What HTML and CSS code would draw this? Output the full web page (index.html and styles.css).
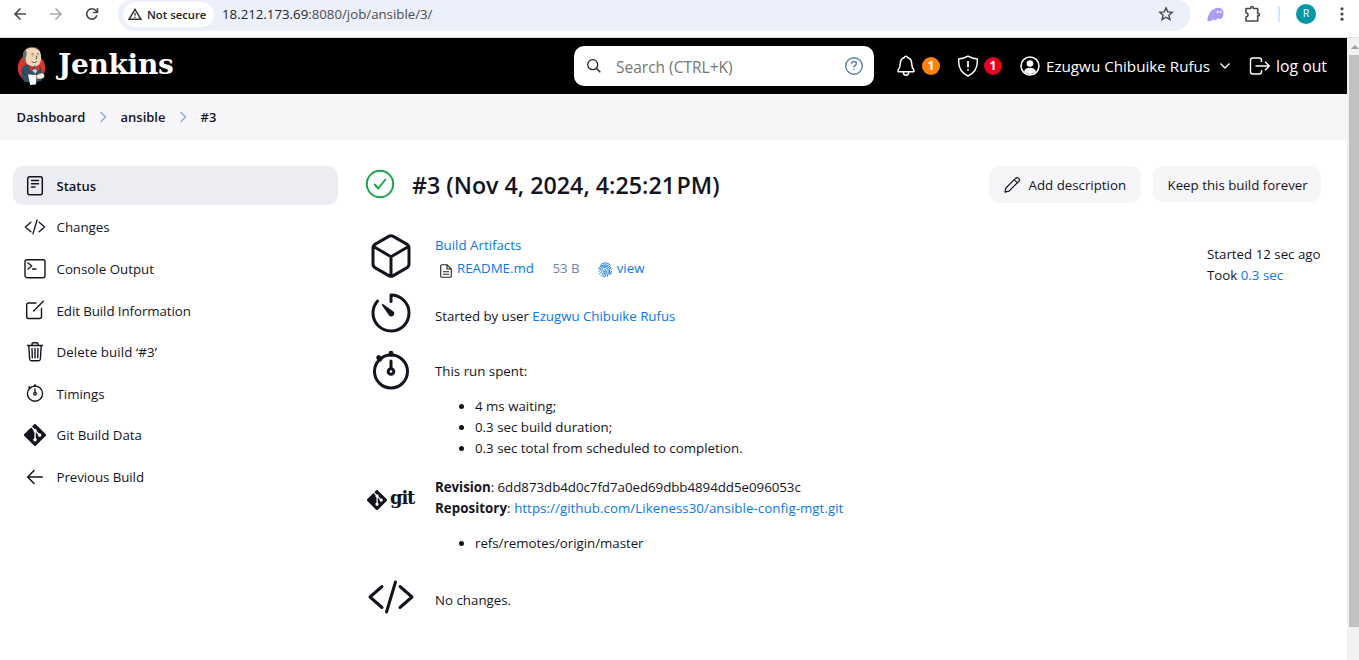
FILE: index.html
```html
<!DOCTYPE html>
<html lang="en">
<head>
<meta charset="utf-8">
<title>#3 - ansible - Jenkins</title>
<link rel="stylesheet" href="styles.css">
</head>
<body>
<svg class="defs" width="0" height="0">
  <symbol id="code" viewBox="0 0 512 512"><path d="M160 368L32 256l128-112M352 368l128-112-128-112M304 96l-96 320" fill="none" stroke="currentColor" stroke-linecap="round" stroke-linejoin="round" stroke-width="32"/></symbol>
  <symbol id="timer" viewBox="0 0 512 512"><circle cx="256" cy="272" r="176" fill="none" stroke="currentColor" stroke-width="32"/><path d="M256 160v72" fill="none" stroke="currentColor" stroke-linecap="round" stroke-width="32"/><circle cx="256" cy="272" r="30" fill="none" stroke="currentColor" stroke-width="32"/><path d="M256 76v12M124 124l14 14" stroke="currentColor" stroke-width="52" stroke-linecap="round"/></symbol>
  <symbol id="git" viewBox="0 0 92 92"><path d="M90.2 41.9 50.1 1.8a5.9 5.9 0 0 0-8.4 0l-8.3 8.4 10.500 10.500a7 7 0 0 1 8.900 9l10.200 10.100a7 7 0 1 1-4.200 4l-9.500-9.500v25a7 7 0 1 1-5.800-.2V33.900a7 7 0 0 1-3.800-9.200L29.400 14.300 1.700 41.900a5.900 5.900 0 0 0 0 8.400l40.100 40.100a5.900 5.900 0 0 0 8.400 0l40-40.100a5.900 5.900 0 0 0 0-8.400z" fill="currentColor"/></symbol>
</svg>

<div class="chrome">
  <svg class="ic" width="14" height="14" viewBox="0 0 14 14"><path d="M7.500 1.500 2 7l5.500 5.500M2 7h11" fill="none" stroke="#45484c" stroke-width="1.600"/></svg>
  <svg class="ic forward" width="14" height="14" viewBox="0 0 14 14"><path d="M6.500 1.500 12 7l-5.500 5.500M12 7H1" fill="none" stroke="#a6a8ab" stroke-width="1.600"/></svg>
  <svg class="ic reload" width="14" height="14" viewBox="0 0 14 14"><path d="M11.900 8.300A5.200 5.200 0 1 1 10.900 3.600L12 5" fill="none" stroke="#45484c" stroke-width="1.600"/><path d="M12.500 1v4.500H8" fill="none" stroke="#45484c" stroke-width="1.600"/></svg>
  <div class="omnibox">
    <div class="chip">
      <svg width="14" height="12" viewBox="0 0 14 12"><path d="M7 1.300 13 11.300H1z" fill="none" stroke="#333" stroke-width="1.400"/><path d="M7 4.800v3M7 8.700v1.300" stroke="#333" stroke-width="1.300"/></svg>
      <span class="not-secure">Not secure</span>
    </div>
    <span class="url"><b>18.212.173.69</b>:8080/job/ansible/3/</span>
    <svg class="star" width="16" height="16" viewBox="0 0 16 16"><path d="m8 1.900 1.800 4 4.400.4-3.300 2.900 1 4.300L8 11.200l-3.900 2.300 1-4.300L1.800 6.300l4.400-.4z" fill="none" stroke="#45484c" stroke-width="1.400"/></svg>
  </div>
  <svg class="ghost" width="17" height="15" viewBox="0 0 17 15"><path d="M.3 13.500C1 6 5.500.8 11.500.8c3.500 0 5 2.400 5 4.800 0 4-1.500 6.700-3.500 6.700-1 0-1-1-1.800-1-1 0-1.500 2-3.200 2-1 0-1.200-.8-1.800-.8-1 0-2 1.800-3.700 1.800-1.300 0-2.300-.2-2.200-.8z" fill="#ab9ff2"/><ellipse cx="10.700" cy="5" rx=".9" ry="1.200" fill="#fff"/><ellipse cx="13.600" cy="5" rx=".9" ry="1.200" fill="#fff"/></svg>
  <svg class="puzzle" width="18" height="18" viewBox="0 0 18 18"><path d="M2 3.500h4.700V2.800a1.300 1.300 0 0 1 2.600 0v.7h4.400v5h.6a1.200 1.200 0 0 1 0 2.400h-.6V16H2v-4c2.700-.4 2.700-3.900 0-4.300z" fill="none" stroke="#45484c" stroke-width="1.600" stroke-linejoin="round"/></svg>
  <i class="split"></i>
  <span class="avatar">R</span>
  <svg class="dots" width="4" height="16" viewBox="0 0 4 16" fill="#45484c"><circle cx="2" cy="2.800" r="1.600"/><circle cx="2" cy="8" r="1.600"/><circle cx="2" cy="13.200" r="1.600"/></svg>
</div>

<div class="viewport">
<div class="page">
  <header class="header">
    <svg class="butler" width="30" height="40" viewBox="0 0 30 40">
      <ellipse cx="14.500" cy="22" rx="13.700" ry="14" fill="#d33833"/>
      <path d="M8 19c-2 .5-3.500 3-3.800 6 0 4 .8 8 3 10.500l11 1.500 6.500-2.500 1-6-2-7.500-6-3z" fill="#335061"/>
      <path d="M7 7C8 2.500 12 .8 16 1c5 .3 7.800 4 8 9 .2 5-.5 9.500-5.500 10.500-4 .8-9-2-10.500-6C6 12 6.300 9.500 7 7z" fill="#f0d6b7"/>
      <path d="M8.500 3.800C5.500 6 5.500 9 6.500 11.500l1 4 1.500.5-.4-4.500C10 10 9.700 8 9.600 6z" fill="#6d6b6d"/>
      <path d="M8 3.800C11 .4 19 .2 22 4.300M14.500 8.300l2.200-.5M20 7.700l1.800.4M15.500 10h.8M21 10h.5M19 9.500l1 2.800-1.500.6M14.500 15.500c2 1.600 4 1.300 5.500-.3" fill="none" stroke="#3b3635" stroke-width=".8"/>
      <path d="m12 19 5 2.300 5-2.300.6 5.200-5-1.500-4 2.500z" fill="#d33833"/>
      <path d="m14.500 24 3-1 3 1.300-2 3.500z" fill="#c8d3dc"/>
      <path d="m18 19.500-3 5M6 25c1 4 3 5 6 5" stroke="#1d2c38" stroke-width=".8" fill="none"/>
      <path d="m11 28.500 8.500.5-.7 9.500-5.600.5z" fill="#fff"/>
      <path d="M19 30c2-2.500 4-2.600 6-3 3 .5 3 3.500 1.500 5-2 1.400-5 1.200-7 .8z" fill="#f4e9dc" stroke="#3b3635" stroke-width=".5"/>
    </svg>
    <span class="wordmark">Jenkins</span>
    <div class="search">
      <svg width="16" height="16" viewBox="0 0 16 16"><circle cx="6.700" cy="6.700" r="5" fill="none" stroke="#222" stroke-width="1.300"/><path d="m10.300 10.300 4 4" stroke="#222" stroke-width="1.500"/></svg>
      <span class="placeholder">Search (CTRL+K)</span>
      <svg width="20" height="20" viewBox="0 0 20 20" fill="none" stroke="#5a80ac"><circle cx="10" cy="10" r="8.300" stroke-width="1.400"/><path d="M7.600 7.700c0-1.400 1-2.100 2.400-2.100s2.400.8 2.400 2c0 1.800-2.400 1.900-2.400 3.800" stroke-width="1.500"/><circle cx="10" cy="13.600" r=".4"/></svg>
    </div>
    <svg class="bell" width="20" height="22" viewBox="0 0 20 22" fill="none" stroke="#fff" stroke-width="1.500" stroke-linejoin="round"><path d="M10 1.200c1 0 1.400.7 1.600 1.300 3 .9 4 3.200 4.100 6.100.1 3.400.7 4.800 2 6.200.7.800.3 2-.9 2H3.200c-1.200 0-1.600-1.200-.9-2 1.300-1.400 1.900-2.800 2-6.200.1-2.900 1.100-5.200 4.100-6.100.2-.6.600-1.300 1.600-1.300zM7.300 17c0 2.100 1 3.300 2.700 3.300s2.700-1.200 2.700-3.300"/></svg>
    <span class="badge orange">1</span>
    <svg class="shield" width="22" height="22" viewBox="0 0 22 22" fill="none" stroke="#fff" stroke-width="1.500" stroke-linejoin="round"><path d="M11 1.200C8 3 5 3.700 1.800 3.900 1 11.500 3.500 17.500 11 21c7.500-3.500 10-9.500 9.200-17.100C17 3.700 14 3 11 1.200z"/><path d="M11 6v6.500M11 14.200v1.600" stroke-width="1.700"/></svg>
    <span class="badge red">1</span>
    <svg class="person" width="20" height="20" viewBox="0 0 20 20"><circle cx="10" cy="10" r="9" fill="none" stroke="#fff" stroke-width="1.500"/><circle cx="10" cy="7.500" r="3.300" fill="#fff"/><path d="M4 15.300c1-2.500 3.200-3.500 6-3.500s5 1 6 3.500C14.500 17 12.300 18 10 18s-4.500-1-6-2.700z" fill="#fff"/></svg>
    <span class="user">Ezugwu Chibuike Rufus</span>
    <svg class="down" width="12" height="8" viewBox="0 0 12 8"><path d="m1.500 1.500 4.500 4.500 4.500-4.500" fill="none" stroke="#fff" stroke-width="1.400"/></svg>
    <svg class="exit" width="22" height="18" viewBox="0 0 22 18" fill="none" stroke="#fff" stroke-width="1.400"><path d="M12.500 5V3.200C12.500 1.900 11.600 1 10.300 1H3.700C2.400 1 1.500 1.900 1.500 3.200v11.600c0 1.300.9 2.200 2.200 2.200h6.600c1.300 0 2.200-.9 2.200-2.200V13M6.500 9H20M16 4.700 20.300 9 16 13.300"/></svg>
    <span class="logout">log out</span>
  </header>

  <nav class="crumbs">
    <span class="c1">Dashboard</span>
    <svg width="8" height="12" viewBox="0 0 8 12"><path d="M1.500 1 6.500 6l-5 5" fill="none" stroke="#8fabc9" stroke-width="1.400"/></svg>
    <span class="c2">ansible</span>
    <svg width="8" height="12" viewBox="0 0 8 12"><path d="M1.500 1 6.500 6l-5 5" fill="none" stroke="#8fabc9" stroke-width="1.400"/></svg>
    <span class="c3">#3</span>
  </nav>

  <div class="body">
    <aside class="side">
      <a class="task active"><svg viewBox="0 0 22 22" fill="none" stroke="currentColor" stroke-width="1.500" stroke-linecap="round"><rect x="3.700" y="1.700" width="14.600" height="18" rx="2"/><path d="M7.500 5.500h7M7.500 8.700h7M7.500 12h3.500"/></svg><span>Status</span></a>
      <a class="task"><svg><use href="#code"/></svg><span>Changes</span></a>
      <a class="task"><svg viewBox="0 0 22 22" fill="none" stroke="currentColor" stroke-width="1.400" stroke-linecap="round" stroke-linejoin="round"><rect x="1" y="1.700" width="20" height="18" rx="2"/><path d="m4 5 3.800 3L4 11M8.500 11H12"/></svg><span>Console Output</span></a>
      <a class="task"><svg viewBox="0 0 22 22" fill="none" stroke="currentColor" stroke-width="1.400" stroke-linecap="round" stroke-linejoin="round"><path d="M12 4H4.700a2 2 0 0 0-2 2v11.500a2 2 0 0 0 2 2H15.500a2 2 0 0 0 2-2V9.500M9.700 12 19.300 2.200"/></svg><span class="edit">Edit Build Information</span></a>
      <a class="task"><svg viewBox="0 0 22 22" fill="none" stroke="currentColor" stroke-width="1.400" stroke-linecap="round" stroke-linejoin="round"><path d="M3.500 4.500h15M4.800 4.500l.8 13.500a2 2 0 0 0 2 1.800h6.800a2 2 0 0 0 2-1.800l.8-13.500M8 4.500V3a1.300 1.300 0 0 1 1.300-1.300h3.400A1.300 1.300 0 0 1 14 3v1.500M11 7.500v9.300M8 7.500l.3 9.300M14 7.500l-.3 9.300"/></svg><span class="delete">Delete build ‘#3’</span></a>
      <a class="task"><svg><use href="#timer"/></svg><span>Timings</span></a>
      <a class="task"><svg><use href="#git"/></svg><span>Git Build Data</span></a>
      <a class="task"><svg viewBox="0 0 22 22" fill="none" stroke="currentColor" stroke-width="1.500" stroke-linecap="round" stroke-linejoin="round"><path d="M10 4.500 3.700 11l6.300 6.500M4 11h14.300"/></svg><span class="prev">Previous Build</span></a>
    </aside>

    <main class="main">
      <div class="title-row">
        <svg width="30" height="30" viewBox="0 0 30 30" fill="none" stroke="#1ea64b" stroke-width="2" stroke-linecap="round" stroke-linejoin="round"><circle cx="15" cy="15" r="13.200"/><path d="m9.700 15.500 3.500 4 7.200-9"/></svg>
        <h1>#3 (Nov 4, 2024, 4:25:21<small> </small>PM)</h1>
        <a class="btn add"><svg width="18" height="18" viewBox="0 0 18 18" fill="none" stroke="currentColor" stroke-width="1.200" stroke-linejoin="round"><path d="M2 16.200 2.900 12 12.500 2.300a2.200 2.200 0 0 1 3.200 3.200L6 15.200zM11.200 3.600l3.200 3.200"/></svg><span>Add description</span></a>
        <a class="btn keep"><span>Keep this build forever</span></a>
      </div>
      <div class="cols">
        <div class="list">
          <section class="row r1">
            <svg class="big" viewBox="0 0 512 512" fill="none" stroke="currentColor" stroke-linecap="round" stroke-linejoin="round" stroke-width="32"><path d="M448 341.400V170.600A48 48 0 0 0 423.700 129l-144-82.100a48 48 0 0 0-47.400 0l-144 82.100A48 48 0 0 0 64 170.600v170.800A48 48 0 0 0 88.300 383l144 82.100a48 48 0 0 0 47.400 0l144-82.100a48 48 0 0 0 24.300-41.600zM69 153.900 256 264l187-110.100M256 463.500V264"/></svg>
            <div>
              <p><a>Build Artifacts</a></p>
              <p class="file">
                <svg class="doc" width="12" height="14" viewBox="0 0 12 14" fill="none" stroke="#222" stroke-width="1.100"><path d="M7 .7H2A1.300 1.300 0 0 0 .7 2v10A1.300 1.300 0 0 0 2 13.300h8a1.300 1.300 0 0 0 1.300-1.300V5zM7 .7V5h4.300M3 7.700h6M3 10.200h6"/></svg>
                <a>README.md</a><span class="size">53 B</span>
                <svg class="finger" width="14" height="16" viewBox="0 0 14 16" fill="none" stroke="#0a78e8" stroke-width="1" stroke-linecap="round"><path d="M2.500 3C5 .1 9.500.2 12 3M.8 6.500C2.500 1.800 11.500 1.200 13.200 7M1 9.500c1-.5 1-1.200 1.200-2C3.200 3 10.800 3 11.700 7.800c.2 1.500.2 3-.2 4.500M1.500 11.800c3-1 2-3.300 2.600-4.600 1-2.600 5.500-2.200 6 1 .2 2 .1 4-.8 6.300M3 13.700c3-2 2.300-4 2.800-5.300.6-1 2.300-.6 2.500.6.2 2-.4 4-1.600 6M7 9.200c.1 2.200-.8 4-2 5.500M13.200 9.300l-.3 2.700"/></svg>
                <a>view</a>
              </p>
            </div>
          </section>
          <section class="row r2">
            <svg class="big" viewBox="0 0 512 512"><path d="M112.900 129A191 191 0 0 0 64 256.300c0 106.800 86.200 192.600 192 192.600s192-85.400 192-192.600A192 192 0 0 0 256.200 64v70" fill="none" stroke="currentColor" stroke-linecap="round" stroke-linejoin="round" stroke-width="32"/><path d="M234 279.200l-73-104.400c-4-5-4-8 0-12 3-3 8-4 13 0L278.200 236.900a31 31 0 0 1-36 50.400 29 29 0 0 1-8.200-8.100z" fill="currentColor"/></svg>
            <div><p class="started">Started by user <a>Ezugwu Chibuike Rufus</a></p></div>
          </section>
          <section class="row r3">
            <svg class="big"><use href="#timer"/></svg>
            <div><p>This run spent:</p>
              <ul><li>4 ms waiting;</li><li>0.3 sec build duration;</li><li>0.3 sec total from scheduled to completion.</li></ul></div>
          </section>
          <section class="row r4">
            <span class="gitlogo"><svg width="20" height="20"><use href="#git"/></svg><span>git</span></span>
            <div><p class="rev"><b>Revision</b>: 6dd873db4d0c7fd7a0ed69dbb4894dd5e096053c</p>
              <p class="repo"><b>Repository</b>: <a>https://github.com/Likeness30/ansible-config-mgt.git</a></p>
              <ul><li class="ref">refs/remotes/origin/master</li></ul></div>
          </section>
          <section class="row r5">
            <svg class="big"><use href="#code"/></svg>
            <div><p>No changes.</p></div>
          </section>
        </div>
        <div class="when"><p>Started 12 sec ago</p><p>Took <a>0.3 sec</a></p></div>
      </div>
    </main>
  </div>
</div>
<div class="scrollbar"><i class="up"></i><i class="thumb"></i></div>
</div>
</body>
</html>
```

FILE: styles.css
```css
* { box-sizing: border-box; }
body { margin: 0; width: 1359px; height: 660px; overflow: hidden; background: #fff; color: #14141f; font: 13.3px/21px "Open Sans", "Noto Sans", sans-serif; }
.defs { position: absolute; }
svg { flex: none; display: block; }
p, ul, h1 { margin: 0; }
span, a, p, h1 { white-space: nowrap; }
a { color: #0a78e8; }

.chrome { display: flex; height: 38px; padding-bottom: 9px; align-items: center; border-bottom: 1px solid #dcdddf; }
.chrome .ic { margin-left: 13px; }
.chrome .forward { margin-left: 22px; }
.chrome .reload { margin-left: 22px; }
.omnibox { display: flex; align-items: center; align-self: flex-start; width: 1072px; height: 31px; margin-left: 19px; padding: 0 16px 3px 5px; background: #ecf0fa; border-radius: 12px 12px 16px 16px; }
.chip { display: flex; align-items: center; width: 91px; height: 25px; padding-left: 5px; gap: 5px; background: #fff; border-radius: 13px; }
.not-secure { font-size: 11.300px; font-weight: 600; color: #222427; }
.url { margin-left: 8px; font-size: 13.250px; color: #4b4d51; }
.url b { font-weight: 400; color: #222427; }
.star { margin-left: auto; }
.ghost { margin-left: 17px; }
.puzzle { margin-left: 20px; }
.split { width: 2px; height: 16px; margin-left: 16px; background: #d3e3fd; }
.avatar { width: 20px; height: 20px; margin-left: 16px; border-radius: 50%; background: #0097a7; color: #fff; font: 10px/20px Roboto, sans-serif; text-align: center; }
.dots { margin-left: 24px; }

.viewport { display: flex; height: 622px; }
.page { width: 1347px; }
.header { display: flex; align-items: center; height: 56px; padding-left: 17px; background: #000; color: #fff; font-size: 15.200px; }
.wordmark { width: 116px; margin: -2px 0 0 11px; font: bold 28px/30px "DejaVu Serif", serif; letter-spacing: -.3px; transform-origin: 0 50%; }
.search { display: flex; align-items: center; width: 300px; height: 40px; margin-left: 400px; padding: 0 10px 0 12px; border-radius: 10px; background: #fff; }
.placeholder { flex: 1; margin-left: 14px; padding-top: 2px; color: #757575; font-size: 15.500px; }
.bell { margin-left: 22px; }
.badge { width: 18px; height: 18px; border-radius: 50%; font: bold 12px/18px "Open Sans", sans-serif; text-align: center; }
.orange { margin-left: 6px; background: #ff820a; }
.shield { margin-left: 17px; }
.red { margin-left: 5px; background: #e6001f; }
.person { margin-left: 18px; }
.user { margin-left: 6px; width: 165px; }
.down { margin-left: 8px; }
.exit { margin-left: 18px; }
.logout { margin-left: 5px; padding-top: 1px; font-size: 15.800px; }

.crumbs { display: flex; align-items: center; height: 46px; padding-left: 16.500px; background: #f6f6f8; font-weight: 600; font-size: 13px; }
.c1 { width: 82.500px; }
.c2 { width: 58px; margin-left: 13.500px; }
.c3 { margin-left: 14px; }

.body { display: flex; padding-top: 26px; }
.side { display: flex; flex-direction: column; gap: 2.600px; width: 325px; margin-left: 13px; }
.task { display: flex; align-items: center; height: 39px; padding: 0 0 0 11px; gap: 10.500px; border-radius: 10px; color: #14141f; }
.task svg { width: 22px; height: 22px; }
.task span { padding-top: 1.500px; }
.edit, .prev { letter-spacing: -.07px; }
.delete { letter-spacing: .1px; }
.active { background: #ecedf3; font-weight: 600; font-size: 13px; }

.main { width: 955px; margin-left: 28px; }
.title-row { display: flex; align-items: flex-start; height: 38px; }
.title-row > svg { margin: 3px 0 0 -1px; }
h1 { flex: 1; margin-left: 17px; font-size: 23.250px; line-height: 38px; height: 38px; font-weight: 600; }
h1 small { font-size: 6px; }
.btn { display: flex; align-items: center; border-radius: 10px; background: #f6f6f8; color: #14141f; }
.btn span { padding-top: 1px; }
.add { width: 152px; height: 37px; padding-left: 14px; gap: 7.500px; }
.keep { width: 168px; height: 36px; margin-left: 12px; padding-left: 14.500px; }
.keep span { padding-top: 2px; }
.cols { display: flex; justify-content: space-between; padding-top: 28px; }
.row { display: flex; gap: 20px; margin-left: 1px; }
.big, .gitlogo { width: 48px; height: 48px; flex: none; }
.r1 { height: 57px; }
.r1 > div { padding-top: 3px; }
.r2 { height: 57px; }
.r2 > div { padding-top: 17px; }
.r3 { height: 130px; }
.r3 > div { padding-top: 15px; }
.r4 { height: 97px; }
.r4 > div { padding-top: 1px; }
.r5 > div { padding-top: 17px; }
.file { display: flex; align-items: center; height: 24px; }
.doc { margin: 5px 5px 0 5px; }
.size { margin-left: 18.500px; color: #6f87a5; }
.finger { margin: 3px 5px 0 18px; }
ul { padding-left: 40px; margin-top: 14px; }
.started, .rev, .ref { letter-spacing: -.03px; }
.repo { letter-spacing: .05px; }
.gitlogo { display: flex; align-items: center; gap: 3px; }
.gitlogo span { font: bold 18px/24px "DejaVu Serif", serif; letter-spacing: -1.200px; margin-top: -4px; }
.when { width: 114px; padding-top: 12px; }

.scrollbar { width: 12px; background: #f1f1f1; }
.up { display: block; width: 0; margin: 7px 0 0 4px; border: 4px solid transparent; border-top: 0; border-bottom: 4px solid #a0a0a0; }
.thumb { display: block; height: 572px; margin: 6px 0 0 2px; background: #c1c1c1; }
```
